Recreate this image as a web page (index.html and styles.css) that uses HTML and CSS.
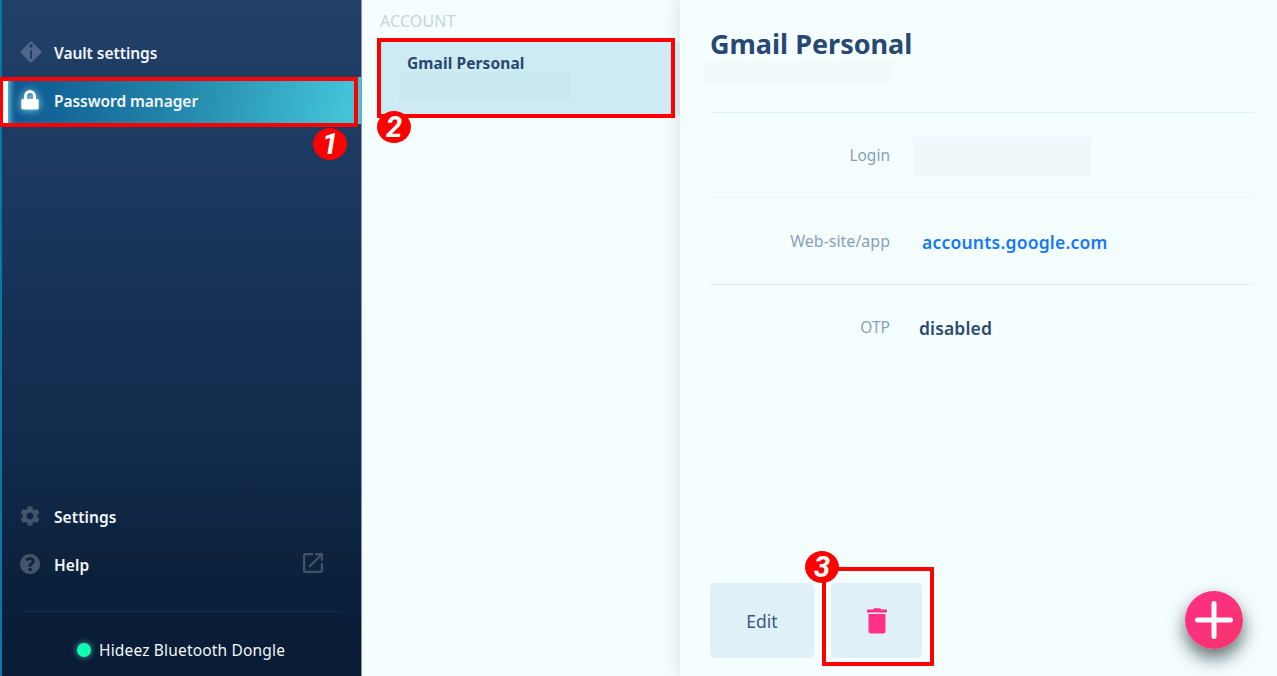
FILE: index.html
```html
<!DOCTYPE html>
<html lang="en">
<head>
<meta charset="utf-8">
<title>Password manager</title>
<link rel="stylesheet" href="styles.css">
</head>
<body>
<div class="app">
  <aside class="sidebar">
    <nav class="nav">
      <a class="nav-item"><svg class="icon dim vault" viewBox="0 0 24 24"><path fill-rule="evenodd" d="M10.800 1Q12 0 13.200 1L23 10.800Q24 12 23 13.200L13.200 23Q12 24 10.800 23L1 13.200Q0 12 1 10.800ZM12 3.300a2 2 0 1 0 .01 0ZM10.900 10V19.500h2.200V10Z"/></svg><span>Vault settings</span></a>
      <a class="nav-item active"><svg class="icon lock" viewBox="0 0 18 20"><path d="M3 9V6a6 6 0 0 1 12 0V9h1.200a1.500 1.500 0 0 1 1.500 1.500v7.500a1.500 1.500 0 0 1-1.500 1.500H1.800A1.500 1.500 0 0 1 .3 18v-7.500A1.500 1.500 0 0 1 1.800 9ZM6 9h6V6a3 3 0 0 0-6 0Z"/></svg><span>Password manager</span></a>
    </nav>
    <nav class="nav">
      <a class="nav-item"><svg class="icon dim" viewBox="2 2 20 20"><path d="M19.14 12.940c.04-.3.06-.61.06-.94 0-.32-.02-.64-.07-.94l2.030-1.580c.18-.14.23-.41.12-.61l-1.920-3.320c-.12-.22-.37-.29-.59-.22l-2.390.96c-.5-.38-1.030-.7-1.620-.94l-.36-2.540c-.04-.24-.24-.41-.48-.41h-3.840c-.24 0-.43.17-.47.41l-.36 2.540c-.59.24-1.130.57-1.620.94l-2.390-.96c-.22-.08-.47 0-.59.22L2.740 8.870c-.12.21-.08.47.12.61l2.030 1.580c-.05.3-.09.63-.09.94s.02.64.07.94l-2.030 1.580c-.18.14-.23.41-.12.61l1.920 3.320c.12.22.37.29.59.22l2.390-.96c.5.38 1.030.7 1.620.94l.36 2.540c.05.24.24.41.48.41h3.840c.24 0 .44-.17.47-.41l.36-2.540c.59-.24 1.130-.56 1.620-.94l2.390.96c.22.08.47 0 .59-.22l1.920-3.320c.12-.22.07-.47-.12-.61l-2.010-1.580zM12 15.400c-1.900 0-3.400-1.500-3.400-3.400s1.500-3.400 3.400-3.400 3.400 1.500 3.400 3.400-1.500 3.400-3.400 3.400z"/></svg><span class="t-set">Settings</span></a>
      <a class="nav-item"><svg class="icon dim" viewBox="2 2 20 20"><path fill-rule="evenodd" d="M12 2a10 10 0 1 0 .01 0ZM10.500 16h3v3h-3ZM10.600 14.700V13.400c0-1.100.8-1.700 1.700-2.300.9-.6 1.300-1 1.300-1.800 0-1-.7-1.500-1.700-1.500s-1.700.6-2.300 1.500L7.500 7.600C8.500 6 10 5.200 12.100 5.200c2.600 0 4.500 1.500 4.500 3.900 0 1.700-.9 2.700-2.100 3.500-.8.6-1.100.8-1.100 1.300v.8Z"/></svg><span>Help</span><svg class="external" viewBox="3 3 18 18"><path d="M19 19H5V5h7V3H5a2 2 0 0 0-2 2v14a2 2 0 0 0 2 2h14c1.100 0 2-.9 2-2v-7h-2v7zM14 3v2h3.590l-9.830 9.830 1.410 1.410L19 6.410V10h2V3h-7z"/></svg></a>
      <div class="device"><i class="dot"></i><span>Hideez Bluetooth Dongle</span></div>
    </nav>
  </aside>
  <section class="accounts">
    <h2 class="accounts-title">ACCOUNT</h2>
    <div class="account"><strong>Gmail Personal</strong><div class="account-login"></div></div>
  </section>
  <main class="details">
    <header class="head"><h1>Gmail Personal</h1><div class="subtitle"></div></header>
    <div class="row"><span class="label">Login</span><div class="login-value"></div></div>
    <div class="row"><span class="label site">Web-site/app</span><a class="value link">accounts.google.com</a></div>
    <div class="row last"><span class="label">OTP</span><span class="value">disabled</span></div>
    <footer class="actions">
      <button class="btn edit">Edit</button>
      <button class="btn trash"><svg viewBox="0 0 20 26"><path d="M1.500 6h17v17a2.500 2.500 0 0 1-2.500 2.500H4A2.500 2.500 0 0 1 1.500 23ZM0 1.500h5.500L7 .3h6l1.500 1.200H20V4.600H0Z"/></svg></button>
      <button class="fab"><svg viewBox="0 0 58 58"><path d="M29 12.500v33M12.500 29h33"/></svg></button>
    </footer>
  </main>
  <div class="mark mark-1"><b class="badge">1</b></div>
  <div class="mark mark-2"><b class="badge">2</b></div>
  <div class="mark mark-3"><b class="badge">3</b></div>
</div>
</body>
</html>
```
FILE: styles.css
```css
* { box-sizing: border-box; }
body { margin: 0; font-family: "Noto Sans", "Open Sans", sans-serif; overflow: hidden; }
h1, h2 { margin: 0; font-weight: inherit; }
span, strong, h1, h2 { white-space: nowrap; }
.app { position: relative; display: grid; grid-template-columns: 362px 318px 597px; width: 1277px; height: 676px; background: #f5feff; }

.sidebar { display: flex; flex-direction: column; justify-content: space-between; padding-top: 29px; border-left: 2px solid #0877a9; border-right: 1px solid #8299ab; background: linear-gradient(#214068, #1b375d 30%, #11294a 68%, #0b213b 86%, #091b35); color: #f3f6f9; font-size: 15.500px; font-weight: 600; letter-spacing: -.05px; }
.nav-item { display: flex; align-items: center; height: 48px; padding-left: 18px; }
.nav-item span { margin-left: 14px; }
.nav + .nav .nav-item { letter-spacing: .08px; }
.icon { width: 20px; height: 20px; margin-bottom: 3px; fill: #44546b; }
.icon.vault { width: 22px; height: 22px; margin: 0 -2px 2px 0; fill: #50668a; }
.nav-item.active { height: 47px; padding-left: 13px; border-left: 6px solid #f5feff; background: linear-gradient(100deg, #0d5992 10px, #2386aa 170px, #42c4d8 340px); box-shadow: inset 5px 0 6px -3px #79cfe0; }
.active .icon.lock { width: 18px; height: 20px; margin: 0 1px 2px 0; fill: #fff; filter: drop-shadow(0 0 4px #9de5f0); }
.external { width: 20px; height: 20px; margin: 0 38px 4px auto; fill: #42546a; }
.device { display: flex; align-items: center; height: 65px; margin: 22px 18px 0 18px; padding: 12px 0 0 57px; border-top: 1px solid #152b47; font-weight: 400; letter-spacing: .17px; }
.dot { width: 14px; height: 14px; margin-right: 8px; border-radius: 50%; background: #0fffb5; box-shadow: 0 0 6px #55b69d; }

.accounts { padding-top: 9px; }
.accounts-title { padding-left: 18px; height: 33px; line-height: 24px; font-size: 16px; letter-spacing: .1px; color: #c4d5de; }
.account { height: 73px; margin-left: 16px; padding: 10px 0 0 29px; background: #ceebf4; color: #284870; font-size: 15.500px; line-height: 22px; letter-spacing: .1px; }
.account strong { display: block; width: max-content; }
.account-login { width: 172px; height: 29px; margin: -2px 0 0 -8px; background: #cae8f0; }

.details { display: flex; flex-direction: column; padding: 0 24px 18px 30px; background: #f5feff; box-shadow: -2px 0 16px #d8e4e8; }
.head { height: 113px; padding-top: 26px; border-bottom: 1px solid #def2fb; color: #264872; }
.head h1 { height: 36px; line-height: 36px; font-size: 27px; font-weight: 700; }
.subtitle { width: 188px; height: 22px; margin-left: -6px; background: #f2fafd; }
.row { display: flex; align-items: center; height: 85px; border-bottom: 1px solid #e7f6fb; }
.row + .row { height: 87px; border-color: #d8f2fb; }
.row.last { border: 0; height: 85px; }
.label { width: 180px; text-align: right; color: #899eb7; font-size: 15.500px; }
.label.site { font-size: 16px; }
.last .label { margin-bottom: 2px; }
.value { margin: 1px 0 0 32px; font-size: 17.500px; font-weight: 600; color: #2b4a70; letter-spacing: .15px; }
.last .value { margin-left: 29px; }
.value.link { color: #1578fc; letter-spacing: .22px; }
.login-value { width: 178px; height: 40px; margin: 3px 0 0 23px; background: #eff7fb; }
.actions { display: flex; align-items: flex-end; margin-top: auto; height: 75px; gap: 17px; }
.btn { display: flex; align-items: center; justify-content: center; height: 75px; padding: 0; border: 0; border-radius: 5px; background: #e0f0f8; color: #3d5981; font: 400 17.500px "Noto Sans", sans-serif; }
.edit { width: 104px; }
.trash { width: 91px; }
.trash svg { width: 20px; height: 26px; fill: #ff3086; }
.fab { width: 58px; height: 58px; margin: 0 10px 9px auto; padding: 0; border: 0; border-radius: 50%; background: linear-gradient(135deg, #ff2f87, #f7346c); box-shadow: 0 9px 18px rgba(30, 45, 50, .7); }
.fab svg { display: block; width: 58px; height: 58px; fill: none; stroke: #f5feff; stroke-width: 5; stroke-linecap: round; }

.mark { position: absolute; border: 4px solid #f00; }
.mark-1 { left: 0; top: 77px; width: 358px; height: 50px; border-left-width: 3px; }
.mark-2 { left: 377px; top: 38px; width: 298px; height: 80px; }
.mark-3 { left: 822px; top: 567px; width: 112px; height: 99px; }
.badge { position: absolute; display: flex; align-items: center; justify-content: center; width: 34px; height: 32px; border-radius: 50%; background: #f00; color: #fff; font: italic 700 29px Roboto, "Liberation Sans", sans-serif; }
.mark-1 .badge { left: 310px; top: 47px; }
.mark-2 .badge { left: -4px; top: 69px; }
.mark-3 .badge { left: -21px; top: -20px; }
```
